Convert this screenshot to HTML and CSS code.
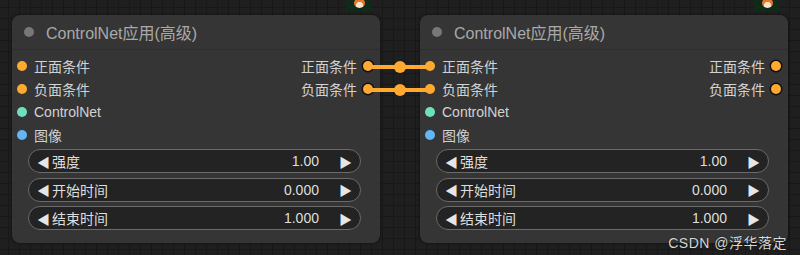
FILE: index.html
```html
<!DOCTYPE html>
<html>
	<head>
		<meta charset="UTF-8">
		<title>ControlNet</title>
		<link rel="stylesheet" href="styles.css">
	</head>
	<body>
		<div class="canvas">
			<div class="node">
				<div class="badge"><span></span></div>
				<div class="title"><i class="dot"></i>ControlNet应用(高级)</div>
				<div class="slots">
					<div class="row"><span class="in"><i class="pin orange"></i>正面条件</span><span class="out">正面条件<i class="pin orange ring"></i></span></div>
					<div class="row"><span class="in"><i class="pin orange"></i>负面条件</span><span class="out">负面条件<i class="pin orange ring"></i></span></div>
					<div class="row"><span class="in"><i class="pin teal"></i>ControlNet</span></div>
					<div class="row"><span class="in"><i class="pin blue"></i>图像</span></div>
				</div>
				<div class="widgets">
					<div class="widget"><span class="arr">◀</span><span class="label">强度</span><span class="val">1.00</span><span class="arr">▶</span></div>
					<div class="widget"><span class="arr">◀</span><span class="label">开始时间</span><span class="val">0.000</span><span class="arr">▶</span></div>
					<div class="widget"><span class="arr">◀</span><span class="label">结束时间</span><span class="val">1.000</span><span class="arr">▶</span></div>
				</div>
			</div>
			<div class="node">
				<div class="badge"><span></span></div>
				<div class="title"><i class="dot"></i>ControlNet应用(高级)</div>
				<div class="slots">
					<div class="row"><span class="in"><i class="pin orange"></i>正面条件</span><span class="out">正面条件<i class="pin orange ring"></i></span></div>
					<div class="row"><span class="in"><i class="pin orange"></i>负面条件</span><span class="out">负面条件<i class="pin orange ring"></i></span></div>
					<div class="row"><span class="in"><i class="pin teal"></i>ControlNet</span></div>
					<div class="row"><span class="in"><i class="pin blue"></i>图像</span></div>
				</div>
				<div class="widgets">
					<div class="widget"><span class="arr">◀</span><span class="label">强度</span><span class="val">1.00</span><span class="arr">▶</span></div>
					<div class="widget"><span class="arr">◀</span><span class="label">开始时间</span><span class="val">0.000</span><span class="arr">▶</span></div>
					<div class="widget"><span class="arr">◀</span><span class="label">结束时间</span><span class="val">1.000</span><span class="arr">▶</span></div>
				</div>
			</div>
			<!-- links between the two nodes -->
			<svg class="links" width="800" height="255">
				<line x1="368" y1="67" x2="431" y2="67" />
				<line x1="368" y1="90" x2="431" y2="90" />
				<circle cx="400" cy="67" r="6" />
				<circle cx="400" cy="90" r="6" />
			</svg>
			<div class="mark">CSDN @浮华落定</div>
		</div>
	</body>
</html>
```

FILE: styles.css
```css
*{
	padding:0;
	margin:0;
	box-sizing:border-box;
}
body{
	width:800px;
	height:255px;
	overflow:hidden;
	background:#1f1f1f;
	font-family:"Liberation Sans","Noto Sans CJK SC",sans-serif;
}
.canvas{
	position:relative;
	width:800px;
	height:255px;
	padding:15px 0 0 12px;
	display:flex;
	gap:40px;
	background-color:#1f1f1f;
	background-image:
		linear-gradient(#181818 1px,transparent 1px),
		linear-gradient(90deg,#181818 1px,transparent 1px);
	background-size:11px 11px;
	background-position:-3px -4px;
}
.node{
	position:relative;
	width:368px;
	height:228px;
	background:#353535;
	border-radius:8px;
	box-shadow:0 0 3px rgba(0,0,0,.6);
}
.badge{
	position:absolute;
	top:-15px;
	right:8px;
	width:26px;
	height:12px;
	background:#0f2a18;
	display:flex;
	justify-content:center;
}
.badge span{
	width:11px;
	height:10px;
	margin-top:-2px;
	border-radius:50%;
	background:radial-gradient(circle at 50% 75%,#f6e3c8 0 35%,#e8762a 42%);
}
.title{
	height:35px;
	display:flex;
	align-items:center;
	padding-left:12px;
	font-size:16px;
	color:#a9a9a9;
	border-bottom:1px solid #2e2e2e;
}
.title .dot{
	width:10px;
	height:10px;
	border-radius:50%;
	background:#777;
	margin-right:12px;
}
.slots{
	padding-top:4px;
}
.row{
	height:23px;
	display:flex;
	align-items:center;
	justify-content:space-between;
	font-size:14px;
	color:#d2d2d2;
	padding:0 7px 0 5px;
}
.row span{
	display:flex;
	align-items:center;
}
.pin{
	width:10px;
	height:10px;
	border-radius:50%;
}
.in .pin{
	margin-right:7px;
}
.out .pin{
	margin-left:6px;
}
.pin.ring{
	box-shadow:0 0 0 1.5px #111;
}
.orange{
	background:#ffa931;
}
.teal{
	background:#6ee0bf;
}
.blue{
	background:#62b6f5;
}
.widgets{
	padding:3px 19px 0 16px;
	display:flex;
	flex-direction:column;
	gap:4.5px;
}
.widget{
	height:24px;
	border:1px solid #6a6a6a;
	border-radius:12px;
	background:#232323;
	display:flex;
	align-items:center;
	padding:0 8px 0 8px;
	font-size:14px;
	color:#dedede;
}
.widget .arr{
	font-size:13px;
	color:#e6e6e6;
}
.widget .label{
	flex:1;
	margin-left:2px;
}
.widget .val{
	margin-right:20px;
}
.links{
	position:absolute;
	left:0;
	top:0;
}
.links line{
	stroke:#ffa931;
	stroke-width:4;
}
.links circle{
	fill:#ffa931;
}
.mark{
	position:absolute;
	right:13px;
	bottom:3px;
	font-size:14px;
	letter-spacing:0.5px;
	color:#d8d8d8;
	text-shadow:0 0 1px #000;
}
```
